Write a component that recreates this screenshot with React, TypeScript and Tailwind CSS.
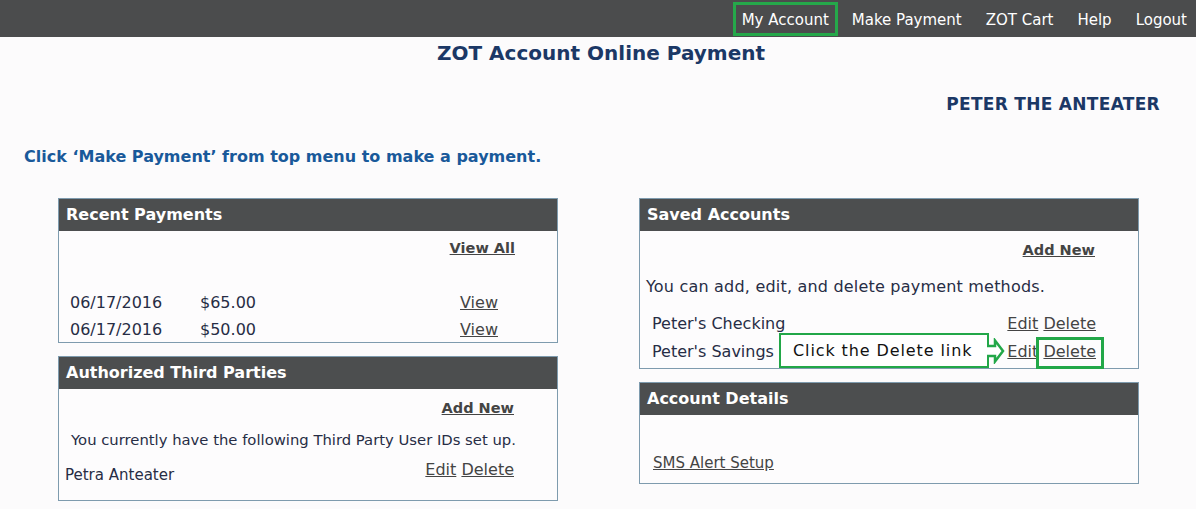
import React from "react";

const F = { fontFamily: '"DejaVu Sans", Verdana, sans-serif' };

function Header({ title }: { title: string }) {
  return (
    <div className="h-[32px] bg-[#4c4e4f] text-white font-bold text-[16px] leading-[32px] pl-[7px]">
      {title}
    </div>
  );
}

function CalloutArrow() {
  return (
    <svg width="18" height="26" viewBox="0 0 18 26" className="block">
      <path
        d="M0 8 H8 V2.5 L16 13 L8 23.5 V18 H0"
        fill="white"
        stroke="#22a748"
        strokeWidth="2.5"
        strokeLinejoin="miter"
      />
    </svg>
  );
}

export default function App() {
  return (
    <div style={F} className="w-[1196px] h-[509px] bg-[#fcfbfc] text-[#272d45] overflow-hidden">
      {/* top nav */}
      <div className="h-[37px] bg-[#4b4c4d] flex justify-end items-stretch pr-[9px] text-white text-[15px]">
        <div className="border-[3px] border-[#25a84a] mt-[2px] mb-[1px] pt-[2px] px-[5px] flex items-center mr-[14px] w-[105px] justify-center">
          My Account
        </div>
        <div className="flex items-center gap-[24px] pt-[4px]">
          <span>Make Payment</span>
          <span>ZOT Cart</span>
          <span>Help</span>
          <span>Logout</span>
        </div>
      </div>

      <div className="text-center text-[#1b3866] font-bold text-[20px] leading-[24px] mt-[4px] pl-[6px]">
        ZOT Account Online Payment
      </div>
      <div className="flex justify-end pr-[36px] mt-[29px] text-[#1b3866] font-bold text-[17px] leading-[20px] tracking-[0.3px]">
        PETER THE ANTEATER
      </div>
      <div className="pl-[24px] mt-[33px] text-[#19599a] font-bold text-[16px] leading-[20px]">
        Click ‘Make Payment’ from top menu to make a payment.
      </div>

      <div className="flex pl-[58px] gap-[81px] mt-[31px]">
        {/* left column */}
        <div className="w-[500px] flex flex-col gap-[13px]">
          <div className="border border-[#7e9bae] bg-[#fdfcfd]">
            <Header title="Recent Payments" />
            <div className="h-[111px] relative text-[16px]">
              <div className="flex justify-end pr-[42px] pt-[7px]">
                <span className="font-bold underline text-[#444] text-[14.5px] leading-[20px]">View All</span>
              </div>
              <div className="mt-[35px] flex flex-col gap-[7px]">
                <div className="flex leading-[20px]">
                  <span className="pl-[11px] w-[141px]">06/17/2016</span>
                  <span className="w-[260px]">$65.00</span>
                  <span className="underline text-[#444]">View</span>
                </div>
                <div className="flex leading-[20px]">
                  <span className="pl-[11px] w-[141px]">06/17/2016</span>
                  <span className="w-[260px]">$50.00</span>
                  <span className="underline text-[#444]">View</span>
                </div>
              </div>
            </div>
          </div>

          <div className="border border-[#7e9bae] bg-[#fdfcfd]">
            <Header title="Authorized Third Parties" />
            <div className="h-[111px]">
              <div className="flex justify-end pr-[43px] pt-[9px]">
                <span className="font-bold underline text-[#444] text-[14.5px] leading-[20px]">Add New</span>
              </div>
              <div className="pl-[12px] mt-[12px] text-[14.8px] leading-[20px]">
                You currently have the following Third Party User IDs set up.
              </div>
              <div className="flex justify-between pr-[43px] mt-[10px]">
                <span className="pl-[6px] text-[15px] leading-[20px] mt-[5px]">Petra Anteater</span>
                <span className="text-[16px] leading-[20px] text-[#444]">
                  <span className="underline">Edit</span> <span className="underline">Delete</span>
                </span>
              </div>
            </div>
          </div>
        </div>

        {/* right column */}
        <div className="w-[500px] flex flex-col gap-[13px]">
          <div className="border border-[#7e9bae] bg-[#fdfcfd] relative">
            <Header title="Saved Accounts" />
            <div className="h-[137px] text-[16px]">
              <div className="flex justify-end pr-[43px] pt-[9px]">
                <span className="font-bold underline text-[#444] text-[14.5px] leading-[20px]">Add New</span>
              </div>
              <div className="pl-[6px] mt-[17px] leading-[20px] tracking-[0.2px]">
                You can add, edit, and delete payment methods.
              </div>
              <div className="mt-[17px] flex flex-col gap-[8px]">
                <div className="flex justify-between pl-[12px] pr-[42px] leading-[20px]">
                  <span>Peter's Checking</span>
                  <span className="text-[#444]">
                    <span className="underline">Edit</span> <span className="underline">Delete</span>
                  </span>
                </div>
                <div className="flex justify-between pl-[12px] pr-[42px] leading-[20px]">
                  <span>Peter's Savings</span>
                  <span className="text-[#444]">
                    <span className="underline">Edit</span> <span className="underline">Delete</span>
                  </span>
                </div>
              </div>
            </div>
            {/* callout */}
            <div className="absolute left-[139px] top-[134px]">
              <div className="w-[210px] h-[35px] bg-white border-[2.5px] border-[#22a748] flex items-center pl-[12px] text-[16px] text-[#111] tracking-[0.9px]">
                Click the Delete link
              </div>
              <div className="absolute left-[208px] top-[4.5px]">
                <CalloutArrow />
              </div>
            </div>
            <div className="absolute left-[396px] top-[138px] w-[68px] h-[32px] border-[3px] border-[#22a748]" />
          </div>

          <div className="border border-[#7e9bae] bg-[#fdfcfd]">
            <Header title="Account Details" />
            <div className="h-[68px] pl-[13px] pt-[36px]">
              <span className="underline text-[15px] leading-[20px] text-[#444]">SMS Alert Setup</span>
            </div>
          </div>
        </div>
      </div>
    </div>
  );
}
